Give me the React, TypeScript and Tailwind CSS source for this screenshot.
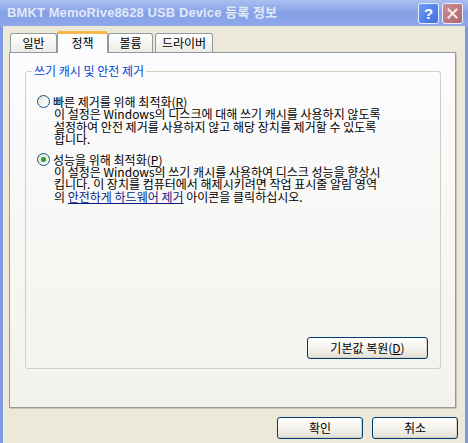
import type { ReactNode } from "react";

function Tab({ children, className }: { children: ReactNode; className: string }) {
  return (
    <div
      className={`h-[19px] flex items-center justify-center rounded-t-[3px] border border-b-0 border-[#919B9C] bg-linear-to-b from-white to-[#ECEBE6] text-[12px] leading-none text-black ${className}`}
    >
      {children}
    </div>
  );
}

function Radio({ checked }: { checked?: boolean }) {
  return (
    <span className="w-[13px] h-[13px] shrink-0 rounded-full border border-[#1C5180] bg-linear-to-br from-[#DCDCD7] via-[#F4F4F0] to-white flex items-center justify-center">
      {checked && <span className="w-[5px] h-[5px] rounded-full bg-[#2DA62D] shadow-[0_0_1px_#7BD97B]" />}
    </span>
  );
}

function XPButton({ children, className }: { children: ReactNode; className: string }) {
  return (
    <button
      className={`h-[22px] rounded-[3px] border border-[#003C74] bg-linear-to-b from-white via-[#F5F4EF] to-[#E2DFD4] shadow-[inset_-1px_-1px_0_#D6D0C5] text-[12px] leading-none text-black ${className}`}
    >
      {children}
    </button>
  );
}

export default function App() {
  return (
    <div className="w-[468px] h-[443px] flex flex-col overflow-hidden font-['Noto_Sans_CJK_KR',sans-serif]">
      {/* Title bar */}
      <div className="h-[26px] shrink-0 flex items-center pl-[7px] pr-[5px] bg-linear-to-b from-[#A9C0F1] via-[#85A1E6] to-[#8DA7EA]">
        <span className="flex-1 text-[13px] font-bold text-[#E0E9FA] font-['Liberation_Sans','Noto_Sans_CJK_KR',sans-serif] tracking-[0.1px]">
          BMKT MemoRive8628 USB Device 등록 정보
        </span>
        <div className="flex gap-[3px]">
          <div className="w-[21px] h-[21px] rounded-[3px] border border-[#E8EEFB] bg-linear-to-br from-[#6E9BF5] to-[#3E6FE0] flex items-center justify-center text-white font-bold text-[15px] leading-none font-['Liberation_Sans',sans-serif]">
            ?
          </div>
          <div className="w-[21px] h-[21px] rounded-[3px] border border-[#E8EEFB] bg-linear-to-br from-[#CC8C92] to-[#B0666F] flex items-center justify-center">
            <svg width="11" height="11" viewBox="0 0 11 11">
              <path d="M1.5 1.5 L9.5 9.5 M9.5 1.5 L1.5 9.5" stroke="#F6ECEE" strokeWidth="2" strokeLinecap="square" />
            </svg>
          </div>
        </div>
      </div>

      {/* Body */}
      <div className="flex-1 bg-[#ECE9D8] border-x-[3px] border-[#7F9AE2] pl-[6px] pr-[9px] pt-[5px]">
        {/* Tabs */}
        <div className="h-[21px] flex items-end relative z-10">
          <Tab className="ml-[1px] w-[47px]">일반</Tab>
          <div className="w-[51px] h-[22px] -mb-px rounded-t-[3px] border border-b-0 border-x-[#919B9C] border-t-[3px] border-t-[#F5B84A] bg-[#FCFCFE] flex items-center justify-center text-[12px] leading-none text-black pb-[2px]">
            정책
          </div>
          <Tab className="w-[45px]">볼륨</Tab>
          <Tab className="ml-[2px] w-[58px]">드라이버</Tab>
        </div>

        {/* Panel */}
        <div className="h-[356px] border border-[#919B9C] bg-linear-to-b from-[#FCFCFE] to-[#F3F2EC] shadow-[1px_1px_0_#C9C6B8] pl-[15px] pr-[14px] pt-[11px]">
          <fieldset className="h-[305px] flex flex-col rounded-[3px] border border-[#D0D0BF]">
            <legend className="ml-[6px] px-[2px] text-[12px] leading-[14px] text-[#0046D5]">
              쓰기 캐시 및 안전 제거
            </legend>
            <div className="pl-[11px] pt-[17px] text-[12px] text-black">
              <div className="flex items-center gap-[3px] leading-[13px]">
                <Radio />
                <span>
                  빠른 제거를 위해 최적화(<span className="underline">R</span>)
                </span>
              </div>
              <div className="pl-[17px] leading-[12.5px] whitespace-nowrap">
                이 설정은 Windows의 디스크에 대해 쓰기 캐시를 사용하지 않도록
                <br />
                설정하여 안전 제거를 사용하지 않고 해당 장치를 제거할 수 있도록
                <br />
                합니다.
              </div>

              <div className="mt-[7px] flex items-center gap-[3px] leading-[13px]">
                <Radio checked />
                <span>
                  성능을 위해 최적화(<span className="underline">P</span>)
                </span>
              </div>
              <div className="pl-[17px] leading-[12.5px] whitespace-nowrap">
                이 설정은 Windows의 쓰기 캐시를 사용하여 디스크 성능을 향상시
                <br />
                킵니다. 이 장치를 컴퓨터에서 해제시키려면 작업 표시줄 알림 영역
                <br />
                의 <span className="text-[#0A1A86] underline">안전하게 하드웨어 제거</span> 아이콘을 클릭하십시오.
              </div>
            </div>

            <div className="mt-auto flex justify-end pr-[12px] pb-[9px]">
              <XPButton className="w-[121px]">
                기본값 복원(<span className="underline">D</span>)
              </XPButton>
            </div>
          </fieldset>
        </div>

        {/* Dialog buttons */}
        <div className="mt-[9px] -mr-[2px] flex justify-end gap-[9px]">
          <XPButton className="w-[86px]">확인</XPButton>
          <XPButton className="w-[86px]">취소</XPButton>
        </div>
      </div>
    </div>
  );
}
